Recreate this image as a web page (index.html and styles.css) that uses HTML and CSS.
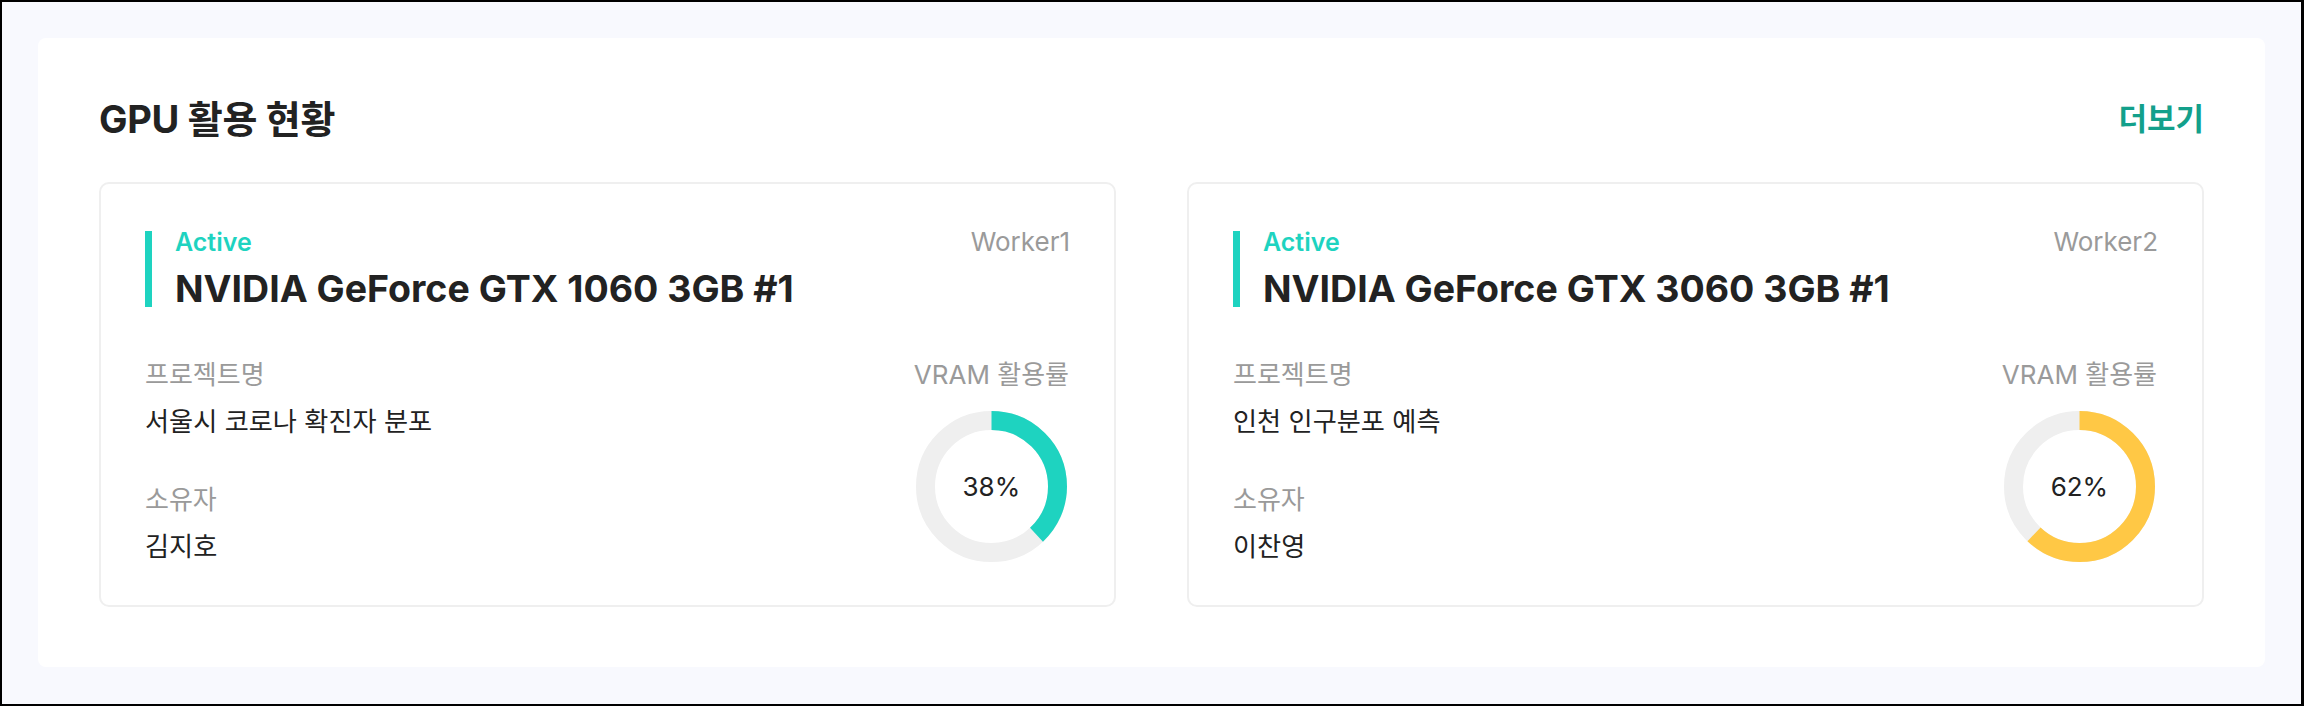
FILE: index.html
```html
<!DOCTYPE html>
<html lang="ko">
<head>
<meta charset="utf-8">
<title>GPU 활용 현황</title>
<link rel="stylesheet" href="styles.css">
</head>
<body>
<div class="frame">
  <section class="panel">
    <header class="panel-head">
      <h2 class="panel-title">GPU 활용 현황</h2>
      <a class="more" href="#">더보기</a>
    </header>
    <div class="cards">
      <article class="card">
        <div class="card-top">
          <div class="name-block">
            <span class="status">Active</span>
            <h3 class="gpu-name">NVIDIA GeForce GTX 1060 3GB #1</h3>
          </div>
          <span class="worker">Worker1</span>
        </div>
        <div class="card-body">
          <dl class="info">
            <dt>프로젝트명</dt>
            <dd>서울시 코로나 확진자 분포</dd>
            <dt>소유자</dt>
            <dd>김지호</dd>
          </dl>
          <div class="vram">
            <span class="vram-label">VRAM 활용률</span>
            <div class="donut">
              <svg width="151" height="151" viewBox="0 0 151 151">
                <circle class="track" cx="75.5" cy="75.5" r="66"/>
                <circle class="bar bar-teal" cx="75.5" cy="75.5" r="66" style="stroke-dasharray: 157.58 414.69"/>
              </svg>
              <span class="pct">38%</span>
            </div>
          </div>
        </div>
      </article>
      <article class="card">
        <div class="card-top">
          <div class="name-block">
            <span class="status">Active</span>
            <h3 class="gpu-name">NVIDIA GeForce GTX 3060 3GB #1</h3>
          </div>
          <span class="worker">Worker2</span>
        </div>
        <div class="card-body">
          <dl class="info">
            <dt>프로젝트명</dt>
            <dd>인천 인구분포 예측</dd>
            <dt>소유자</dt>
            <dd>이찬영</dd>
          </dl>
          <div class="vram">
            <span class="vram-label">VRAM 활용률</span>
            <div class="donut">
              <svg width="151" height="151" viewBox="0 0 151 151">
                <circle class="track" cx="75.5" cy="75.5" r="66"/>
                <circle class="bar bar-yellow" cx="75.5" cy="75.5" r="66" style="stroke-dasharray: 257.11 414.69"/>
              </svg>
              <span class="pct">62%</span>
            </div>
          </div>
        </div>
      </article>
    </div>
  </section>
</div>
</body>
</html>
```

FILE: styles.css
```css
* { box-sizing: border-box; }
html, body { margin: 0; padding: 0; }
body {
  font-family: "Inter", "Noto Sans CJK KR", sans-serif;
  color: #222;
}
.frame {
  width: 2304px;
  height: 706px;
  border: 2px solid #000;
  border-right-width: 3px;
  background: #f8f9fe;
  padding: 36px;
}
.panel {
  background: #fff;
  border-radius: 8px;
  height: 629px;
  padding: 61px 61px 60px 61px;
}
.panel-head {
  display: flex;
  justify-content: space-between;
  align-items: center;
  height: 40px;
  margin-bottom: 43px;
}
.panel-title {
  margin: 0;
  font-size: 38px;
  font-weight: 700;
  line-height: 40px;
  color: #222;
  letter-spacing: -0.3px;
}
.more {
  font-size: 31px;
  font-weight: 700;
  color: #13a08b;
  text-decoration: none;
  line-height: 40px;
}
.cards {
  display: flex;
  gap: 71px;
}
.card {
  flex: 1;
  border: 2px solid #efefef;
  border-radius: 10px;
  padding: 47px 44px 43px 44px;
  height: 425px;
}
.card-top {
  display: flex;
  justify-content: space-between;
  align-items: flex-start;
}
.name-block {
  border-left: 7px solid #1ed3c0;
  padding-left: 23px;
  display: flex;
  flex-direction: column;
  gap: 18px;
}
.status {
  font-size: 25px;
  font-weight: 600;
  line-height: 22px;
  color: #1ed3c0;
}
.gpu-name {
  margin: 0;
  font-size: 37.5px;
  font-weight: 700;
  line-height: 36px;
  color: #222;
}
.worker {
  font-size: 26px;
  line-height: 22px;
  color: #9a9a9a;
}
.card-body {
  display: flex;
  justify-content: space-between;
  margin-top: 53px;
}
.info {
  margin: 0;
  display: flex;
  flex-direction: column;
}
.info dt {
  font-size: 26px;
  line-height: 30px;
  color: #9a9a9a;
}
.info dd {
  margin: 17px 0 0 0;
  font-size: 26.2px;
  line-height: 30px;
  color: #222;
}
.info dd + dt {
  margin-top: 48px;
}
.vram {
  display: flex;
  flex-direction: column;
  align-items: center;
  gap: 21px;
  margin-right: 1px;
}
.vram-label {
  font-size: 26px;
  line-height: 30px;
  color: #9a9a9a;
}
.donut {
  position: relative;
  width: 151px;
  height: 151px;
}
.donut svg {
  display: block;
  transform: rotate(-90deg);
}
.track {
  fill: none;
  stroke: #efefef;
  stroke-width: 19;
}
.bar {
  fill: none;
  stroke-width: 19;
}
.bar-teal { stroke: #1ed3c0; }
.bar-yellow { stroke: #ffc845; }
.pct {
  position: absolute;
  inset: 0;
  display: flex;
  align-items: center;
  justify-content: center;
  font-size: 26px;
  color: #222;
}
```
